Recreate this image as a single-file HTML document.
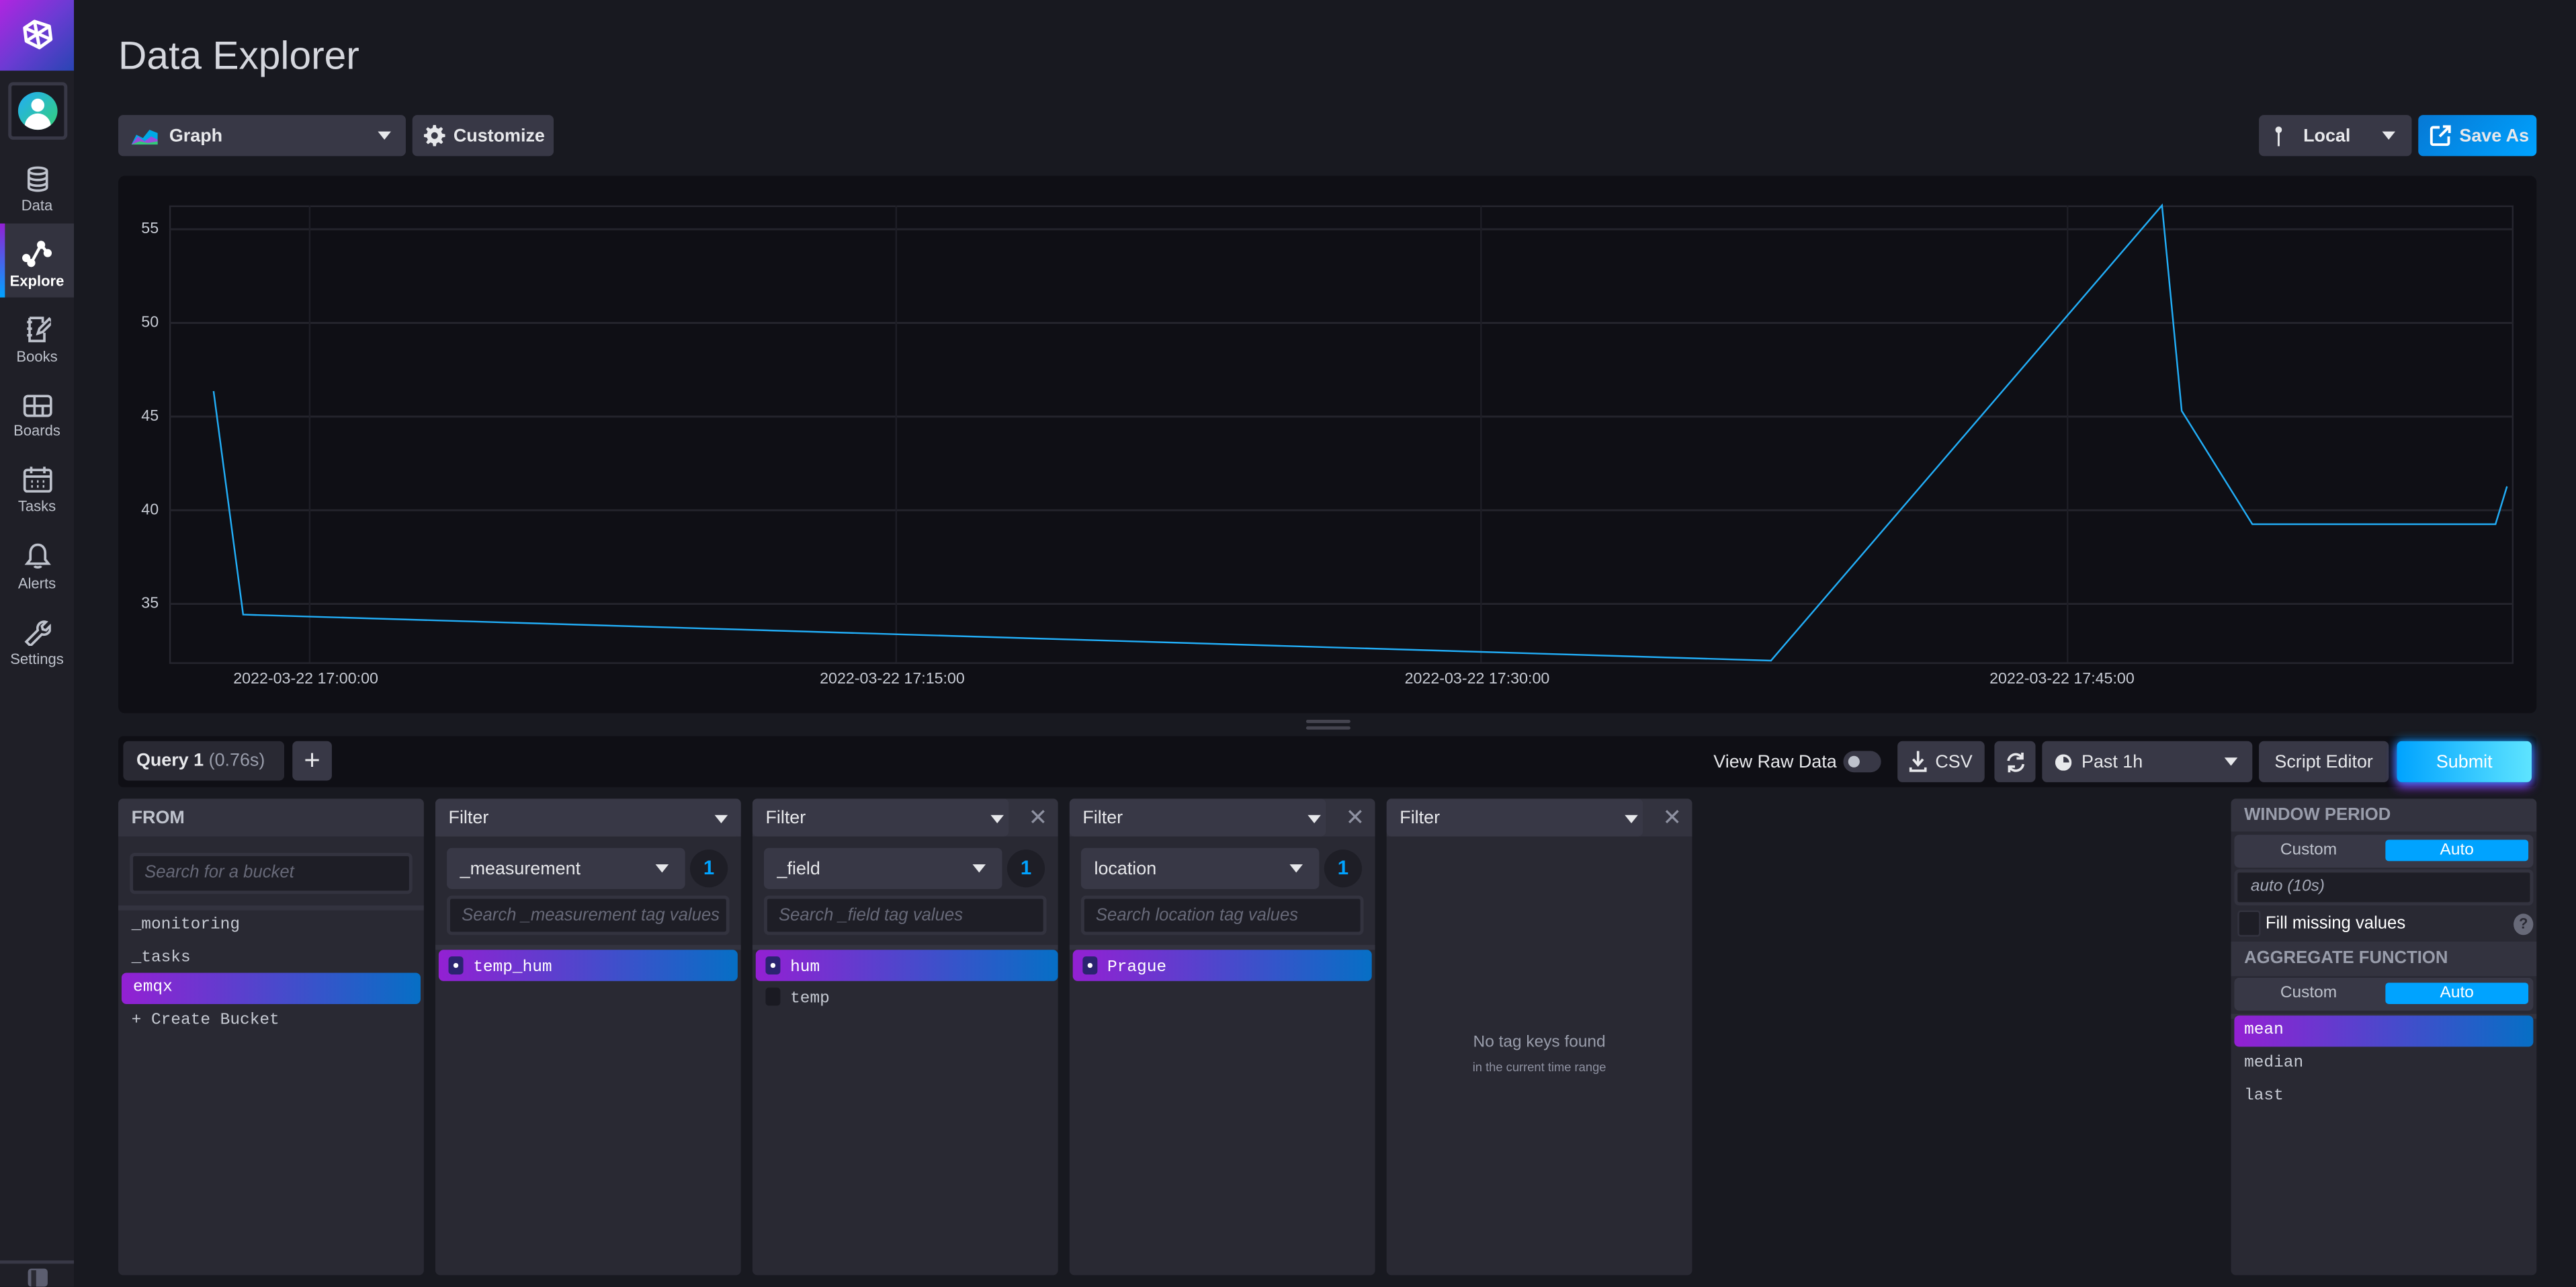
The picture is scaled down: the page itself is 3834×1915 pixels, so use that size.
<!DOCTYPE html>
<html><head><meta charset="utf-8"><style>
*{box-sizing:border-box;margin:0;padding:0}
html,body{width:3834px;height:1914px;overflow:hidden;background:#181920}
#s{position:absolute;left:0;top:0;width:1568px;height:783px;transform:scale(2.44515);transform-origin:0 0;font-family:"Liberation Sans",sans-serif;color:#e7e8eb;background:#181920}
.a{position:absolute}
.sb{left:0;top:0;width:45px;height:783px;background:#1f1f27}
.nav{position:absolute;left:0;width:45px;text-align:center;font-size:9px;color:#bec2cc}
.nav svg{display:block;margin:0 auto 3px}
.btn{position:absolute;background:#383846;border-radius:3px;font-size:11px;font-weight:bold;color:#e7e8eb;display:flex;align-items:center}
.card{position:absolute;top:486px;height:290px;width:186px;background:#292933;border-radius:3px;overflow:hidden}
.hd{position:absolute;left:0;top:0;width:100%;height:23px;background:#33333f}
.hsel{position:absolute;left:0;top:0;height:23px;background:#383846;border-radius:3px;font-size:11px;padding:6px 8px;color:#e7e8eb}
.tri{position:absolute;width:0;height:0;border-left:4.5px solid transparent;border-right:4.5px solid transparent;border-top:5px solid #e7e8eb}
.inp{position:absolute;background:#1e1e26;border:2px solid #33333f;border-radius:3px;font-size:10.5px;font-style:italic;color:#676978;padding:4px 7px;white-space:nowrap;overflow:hidden}
.sel{position:absolute;height:19px;border-radius:3px;background:linear-gradient(90deg,#9320d3,#066fc5);font-family:"Liberation Mono",monospace;font-size:10px;color:#fff;padding:4px 7px}
.it{position:absolute;font-family:"Liberation Mono",monospace;font-size:10px;color:#c6cad3}
.dot{display:inline-block;width:9px;height:11px;background:#2a2470;border-radius:2px;vertical-align:-2px;margin-right:6px;position:relative}
.dot:after{content:"";position:absolute;left:3px;top:4px;width:3px;height:3px;border-radius:50%;background:#fff}
.box{display:inline-block;width:9px;height:11px;background:#1a1a22;border-radius:2px;vertical-align:-2px;margin-right:6px}
.badge{position:absolute;width:23px;height:23px;border-radius:50%;background:#1e1e26;color:#00a3ff;font-weight:bold;font-size:12px;text-align:center;line-height:23px}
.x{position:absolute;color:#8e91a1;font-size:14px}
.div{position:absolute;left:0;width:100%;height:3px;background:#33333f}
.ax{position:absolute;font-size:9.5px;color:#c6cad3}
</style></head><body><div id="s">
<div class="a sb"></div>
<div class="a" style="left:0;top:0;width:45px;height:43px;background:linear-gradient(135deg,#b025e0,#6b3bd3 50%,#2845b3)"></div>
<svg class="a" style="left:13px;top:11px" width="20" height="20" viewBox="0 0 20 20" fill="none" stroke="#fff" stroke-width="2" stroke-linejoin="round"><path d="M8 2 L17 5 L18 13 L11 18 L3 14 L2 6 Z M8 2 L11 18 M2 6 L18 13 M17 5 L3 14"/></svg>
<div class="a" style="left:5px;top:50px;width:36px;height:35px;border:2px solid #383846;border-radius:3px;background:#1a1a22"></div>
<div class="a" style="left:11px;top:56px;width:24px;height:23px;border-radius:50%;background:linear-gradient(135deg,#22adf6,#34d178);overflow:hidden"><div class="a" style="left:8px;top:4px;width:8px;height:8px;border-radius:50%;background:#fff"></div><div class="a" style="left:4px;top:13px;width:16px;height:12px;border-radius:8px 8px 0 0;background:#fff"></div></div>
<div class="nav" style="top:101px"><svg width="14" height="16" viewBox="0 0 14 16" fill="none" stroke="#bec2cc" stroke-width="1.5"><ellipse cx="7" cy="3" rx="5.5" ry="2"/><path d="M1.5 3v10c0 1.1 2.5 2 5.5 2s5.5-.9 5.5-2V3M1.5 6.5c0 1.1 2.5 2 5.5 2s5.5-.9 5.5-2M1.5 10c0 1.1 2.5 2 5.5 2s5.5-.9 5.5-2"/></svg>Data</div>
<div class="a" style="left:0;top:136px;width:45px;height:45px;background:#33333f"></div>
<div class="a" style="left:0;top:136px;width:3px;height:45px;background:linear-gradient(#9320d3,#00a3ff)"></div>
<div class="nav" style="top:145px;color:#fff;font-weight:bold"><svg width="20" height="18" viewBox="0 0 20 18" fill="none" stroke="#fff" stroke-width="1.8"><path d="M3 12 L6 15 L12 4 L16 9"/><circle cx="3" cy="12" r="1.6" fill="#fff"/><circle cx="6" cy="15" r="1.6" fill="#fff"/><circle cx="12" cy="4" r="1.6" fill="#fff"/><circle cx="16" cy="9" r="1.6" fill="#fff"/></svg>Explore</div>
<div class="nav" style="top:192px"><svg width="16" height="17" viewBox="0 0 16 17" fill="none" stroke="#bec2cc" stroke-width="1.5"><path d="M3 1.5h8v3M3 1.5v14h9v-5M1.5 4h3M1.5 8h3M1.5 12h3M8 11l1-3 6-6 2 2-6 6z"/></svg>Books</div>
<div class="nav" style="top:240px"><svg width="18" height="14" viewBox="0 0 18 14" fill="none" stroke="#bec2cc" stroke-width="1.5"><rect x="1" y="1" width="16" height="12" rx="2"/><path d="M1 7h16M7 1v12M12 7v6"/></svg>Boards</div>
<div class="nav" style="top:284px"><svg width="18" height="16" viewBox="0 0 18 16" fill="none" stroke="#bec2cc" stroke-width="1.5"><rect x="1" y="2" width="16" height="13" rx="1.5"/><path d="M1 6h16M5 0v4M13 0v4M5 9h1M8.5 9h1M12 9h1M5 12h1M8.5 12h1M12 12h1"/></svg>Tasks</div>
<div class="nav" style="top:330px"><svg width="16" height="17" viewBox="0 0 16 17" fill="none" stroke="#bec2cc" stroke-width="1.5"><path d="M8 1.5c-3 0-4.5 2.5-4.5 5v4L1.5 13h13l-2-2.5v-4c0-2.5-1.5-5-4.5-5zM6 14.5c.5 1 3.5 1 4 0"/></svg>Alerts</div>
<div class="nav" style="top:376px"><svg width="17" height="17" viewBox="0 0 17 17" fill="none" stroke="#bec2cc" stroke-width="1.5"><path d="M2 14.5l7-7a4 4 0 0 1 5-5l-2.5 2.5.5 2 2 .5L16.5 5a4 4 0 0 1-5 5l-7 7z"/></svg>Settings</div>
<div class="a" style="left:0;top:767px;width:45px;height:2px;background:#383846"></div>
<div class="a" style="left:17px;top:772px;width:12px;height:11px;border-radius:2px;background:#5c5e70"></div>
<div class="a" style="left:19px;top:773px;width:3px;height:10px;background:#2a2a33"></div>

<div class="a" style="left:72px;top:21px;font-size:24px;color:#d5d7de">Data Explorer</div>
<div class="btn" style="left:72px;top:70px;width:175px;height:25px;padding-left:8px">
<svg width="16" height="10" viewBox="0 0 16 10"><path d="M0 10 L3 4 L7 6 L11 1 L16 3 V10Z" fill="#00a9e6"/><path d="M0 10 L4 5 L8 8 L12 5 L16 7 V10Z" fill="#9b4ddb"/><path d="M0 10 L5 8 L10 9 L16 8 V10Z" fill="#34c87a"/></svg>
<span style="margin-left:7px">Graph</span><div class="tri" style="left:158px;top:10px"></div></div>
<div class="btn" style="left:251px;top:70px;width:86px;height:25px;padding-left:7px">
<svg width="13" height="13" viewBox="0 0 16 16"><path fill="#e7e8eb" d="M7 0h2l.4 2.2 1.6.7 1.9-1.3 1.4 1.4-1.3 1.9.7 1.6L16 7v2l-2.2.4-.7 1.6 1.3 1.9-1.4 1.4-1.900-1.3-1.6.7L9 16H7l-.4-2.2-1.6-.7-1.9 1.3-1.4-1.4 1.3-1.9-.7-1.6L0 9V7l2.2-.4.7-1.6-1.3-1.9 1.4-1.4 1.9 1.3 1.6-.7z"/><circle cx="8" cy="8" r="2.5" fill="#383846"/></svg>
<span style="margin-left:5px">Customize</span></div>
<div class="btn" style="left:1375px;top:70px;width:93px;height:25px;padding-left:10px">
<svg width="4" height="12" viewBox="0 0 4 12"><circle cx="2" cy="2" r="2" fill="#e7e8eb"/><rect x="1.4" y="3" width="1.2" height="9" fill="#e7e8eb"/></svg>
<span style="margin-left:13px">Local</span><div class="tri" style="left:75px;top:10px"></div></div>
<div class="btn" style="left:1472px;top:70px;width:72px;height:25px;padding-left:7px;background:linear-gradient(135deg,#0678d4,#00a3ff)">
<svg width="13" height="13" viewBox="0 0 13 13" fill="none" stroke="#fff" stroke-width="1.6"><path d="M6 1.5H2a1 1 0 0 0-1 1v8.5a1 1 0 0 0 1 1h8.5a1 1 0 0 0 1-1V7M6 7l6-6M8 1h4v4"/></svg>
<span style="margin-left:5px">Save As</span></div>

<div class="a" style="left:72px;top:107px;width:1472px;height:327px;background:#0f0f15;border-radius:4px"></div>
<svg class="a" style="left:0;top:0" width="1568" height="783">
<g stroke="#22222b" stroke-width="1" fill="none">
<rect x="103.5" y="125.5" width="1426" height="278" stroke="#26262f"/>
<path d="M103 139.5H1530M103 196.5H1530M103 253.5H1530M103 310.5H1530M103 367.5H1530" stroke="#24242c" stroke-width="1.2"/>
<path d="M188.5 125V403M545.5 125V403M901.5 125V403M1258.5 125V403" stroke="#1e1e26"/>
</g>
<polyline points="130,238 148,374 1078,402 1316,125 1328,250 1371,319 1519,319 1526,296" fill="none" stroke="#22adf6" stroke-width="1"/>
</svg>
<div class="ax" style="left:86px;top:134px">55</div>
<div class="ax" style="left:86px;top:191px">50</div>
<div class="ax" style="left:86px;top:248px">45</div>
<div class="ax" style="left:86px;top:305px">40</div>
<div class="ax" style="left:86px;top:362px">35</div>
<div class="ax" style="left:142px;top:408px">2022-03-22 17:00:00</div>
<div class="ax" style="left:499px;top:408px">2022-03-22 17:15:00</div>
<div class="ax" style="left:855px;top:408px">2022-03-22 17:30:00</div>
<div class="ax" style="left:1211px;top:408px">2022-03-22 17:45:00</div>
<div class="a" style="left:795px;top:438px;width:27px;height:2px;background:#44444f;border-radius:1px"></div>
<div class="a" style="left:795px;top:442px;width:27px;height:2px;background:#44444f;border-radius:1px"></div>

<div class="a" style="left:72px;top:448px;width:1472px;height:31px;background:#0f0f15;border-radius:3px"></div>
<div class="btn" style="left:75px;top:451px;width:98px;height:24px;background:#292933;padding-left:8px;font-weight:bold">Query 1&nbsp;<span style="color:#999dab;font-weight:normal">(0.76s)</span></div>
<div class="btn" style="left:178px;top:451px;width:24px;height:24px;justify-content:center;font-size:17px;font-weight:normal">+</div>
<div class="a" style="left:1043px;top:458px;font-size:11px;color:#e7e8eb">View Raw Data</div>
<div class="a" style="left:1122px;top:457px;width:23px;height:13px;border-radius:7px;background:#383846"><div class="a" style="left:3px;top:3px;width:7px;height:7px;border-radius:50%;background:#bec2cc"></div></div>
<div class="btn" style="left:1155px;top:451px;width:53px;height:25px;padding-left:7px">
<svg width="11" height="13" viewBox="0 0 11 13" fill="none" stroke="#e7e8eb" stroke-width="1.5"><path d="M5.5 0v8M2.5 5l3 3.5 3-3.5M1 10v2h9v-2"/></svg><span style="margin-left:5px;font-weight:normal">CSV</span></div>
<div class="btn" style="left:1214px;top:451px;width:25px;height:25px;justify-content:center">
<svg width="12" height="14" viewBox="0 0 12 14" fill="none" stroke="#e7e8eb" stroke-width="1.5"><path d="M10 4.5A4.5 4.5 0 0 0 1.5 6M2 9.5A4.5 4.5 0 0 0 10.5 8M10 1v3.5H6.5M2 13V9.5h3.5"/></svg></div>
<div class="btn" style="left:1243px;top:451px;width:128px;height:25px;padding-left:8px">
<svg width="10" height="10" viewBox="0 0 10 10"><circle cx="5" cy="5" r="5" fill="#e7e8eb"/><path d="M5 5V1.5A3.5 3.5 0 0 1 8.5 5z" fill="#383846"/></svg><span style="margin-left:6px;font-weight:normal">Past 1h</span><div class="tri" style="left:111px;top:10px"></div></div>
<div class="btn" style="left:1375px;top:451px;width:79px;height:25px;justify-content:center;font-weight:normal">Script Editor</div>
<div class="btn" style="left:1459px;top:451px;width:82px;height:25px;justify-content:center;font-weight:normal;color:#fff;background:linear-gradient(90deg,#00a3ff,#5ee4ff);box-shadow:0 0 6px #00a3ff,0 3px 6px #9320d3">Submit</div>

<div class="card" style="left:72px">
<div class="hd"></div><div class="a" style="left:8px;top:6px;font-size:11px;font-weight:bold;color:#bec2cc">FROM</div>
<div class="inp" style="left:7px;top:33px;width:172px;height:25px">Search for a bucket</div>
<div class="div" style="top:65px"></div>
<div class="it" style="left:8px;top:72px">_monitoring</div>
<div class="it" style="left:8px;top:92px">_tasks</div>
<div class="sel" style="left:2px;top:106px;width:182px;padding-left:7px">emqx</div>
<div class="it" style="left:8px;top:130px">+ Create Bucket</div>
</div>

<div class="card" style="left:265px">
<div class="hd" style="background:#383846"></div><div class="hsel" style="width:186px">Filter</div><div class="tri" style="left:170px;top:10px"></div>
<div class="hsel" style="left:7px;top:30px;width:145px;height:25px;padding:7px 8px">_measurement</div><div class="tri" style="left:134px;top:40px"></div>
<div class="badge" style="left:155px;top:31px">1</div>
<div class="inp" style="left:7px;top:59px;width:172px;height:24px">Search _measurement tag values</div>
<div class="div" style="top:89px"></div>
<div class="sel" style="left:2px;top:92px;width:182px;padding-left:6px"><span class="dot"></span>temp_hum</div>
</div>

<div class="card" style="left:458px">
<div class="hd"></div><div class="hsel" style="width:156px">Filter</div><div class="tri" style="left:145px;top:10px"></div><div class="x" style="left:168px;top:3px">✕</div>
<div class="hsel" style="left:7px;top:30px;width:145px;height:25px;padding:7px 8px">_field</div><div class="tri" style="left:134px;top:40px"></div>
<div class="badge" style="left:155px;top:31px">1</div>
<div class="inp" style="left:7px;top:59px;width:172px;height:24px">Search _field tag values</div>
<div class="div" style="top:89px"></div>
<div class="sel" style="left:2px;top:92px;width:184px;padding-left:6px"><span class="dot"></span>hum</div>
<div class="it" style="left:8px;top:115px"><span class="box"></span>temp</div>
</div>

<div class="card" style="left:651px">
<div class="hd"></div><div class="hsel" style="width:156px">Filter</div><div class="tri" style="left:145px;top:10px"></div><div class="x" style="left:168px;top:3px">✕</div>
<div class="hsel" style="left:7px;top:30px;width:145px;height:25px;padding:7px 8px">location</div><div class="tri" style="left:134px;top:40px"></div>
<div class="badge" style="left:155px;top:31px">1</div>
<div class="inp" style="left:7px;top:59px;width:172px;height:24px">Search location tag values</div>
<div class="div" style="top:89px"></div>
<div class="sel" style="left:2px;top:92px;width:182px;padding-left:6px"><span class="dot"></span>Prague</div>
</div>

<div class="card" style="left:844px">
<div class="hd"></div><div class="hsel" style="width:156px">Filter</div><div class="tri" style="left:145px;top:10px"></div><div class="x" style="left:168px;top:3px">✕</div>
<div class="a" style="left:0;top:143px;width:186px;text-align:center;font-size:10px;color:#999dab">No tag keys found</div>
<div class="a" style="left:0;top:159px;width:186px;text-align:center;font-size:7.5px;color:#8e91a1">in the current time range</div>
</div>

<div class="card" style="left:1358px">
<div class="a" style="left:0;top:0;width:186px;height:20px;background:#33333f"></div>
<div class="a" style="left:8px;top:4px;font-size:10.5px;font-weight:bold;color:#999dab">WINDOW PERIOD</div>
<div class="a" style="left:2px;top:22px;width:182px;height:20px;background:#383846;border-radius:3px"></div>
<div class="a" style="left:30px;top:26px;font-size:10px;color:#bec2cc">Custom</div>
<div class="a" style="left:94px;top:25px;width:87px;height:13px;background:#00a3ff;border-radius:2px;font-size:10px;color:#fff;text-align:center;line-height:13px">Auto</div>
<div class="inp" style="left:2px;top:43px;width:182px;height:22px;font-size:10px;color:#a4a8b6;padding:3px 8px">auto (10s)</div>
<div class="a" style="left:4px;top:68px;width:14px;height:16px;background:#1e1e26;border:1px solid #33333f;border-radius:2px"></div>
<div class="a" style="left:21px;top:70px;font-size:10.5px;color:#fff">Fill missing values</div>
<div class="a" style="left:172px;top:70px;width:12px;height:13px;border-radius:50%;background:#676978;font-size:9px;font-weight:bold;color:#292933;text-align:center;line-height:13px">?</div>
<div class="a" style="left:0;top:87px;width:186px;height:21px;background:#33333f"></div>
<div class="a" style="left:8px;top:91px;font-size:10.5px;font-weight:bold;color:#999dab">AGGREGATE FUNCTION</div>
<div class="a" style="left:2px;top:109px;width:182px;height:20px;background:#383846;border-radius:3px"></div>
<div class="a" style="left:30px;top:113px;font-size:10px;color:#bec2cc">Custom</div>
<div class="a" style="left:94px;top:112px;width:87px;height:13px;background:#00a3ff;border-radius:2px;font-size:10px;color:#fff;text-align:center;line-height:13px">Auto</div>
<div class="div" style="top:131px"></div>
<div class="sel" style="left:2px;top:132px;width:182px;padding-left:6px">mean</div>
<div class="it" style="left:8px;top:156px">median</div>
<div class="it" style="left:8px;top:176px">last</div>
</div>
</div></body></html>
